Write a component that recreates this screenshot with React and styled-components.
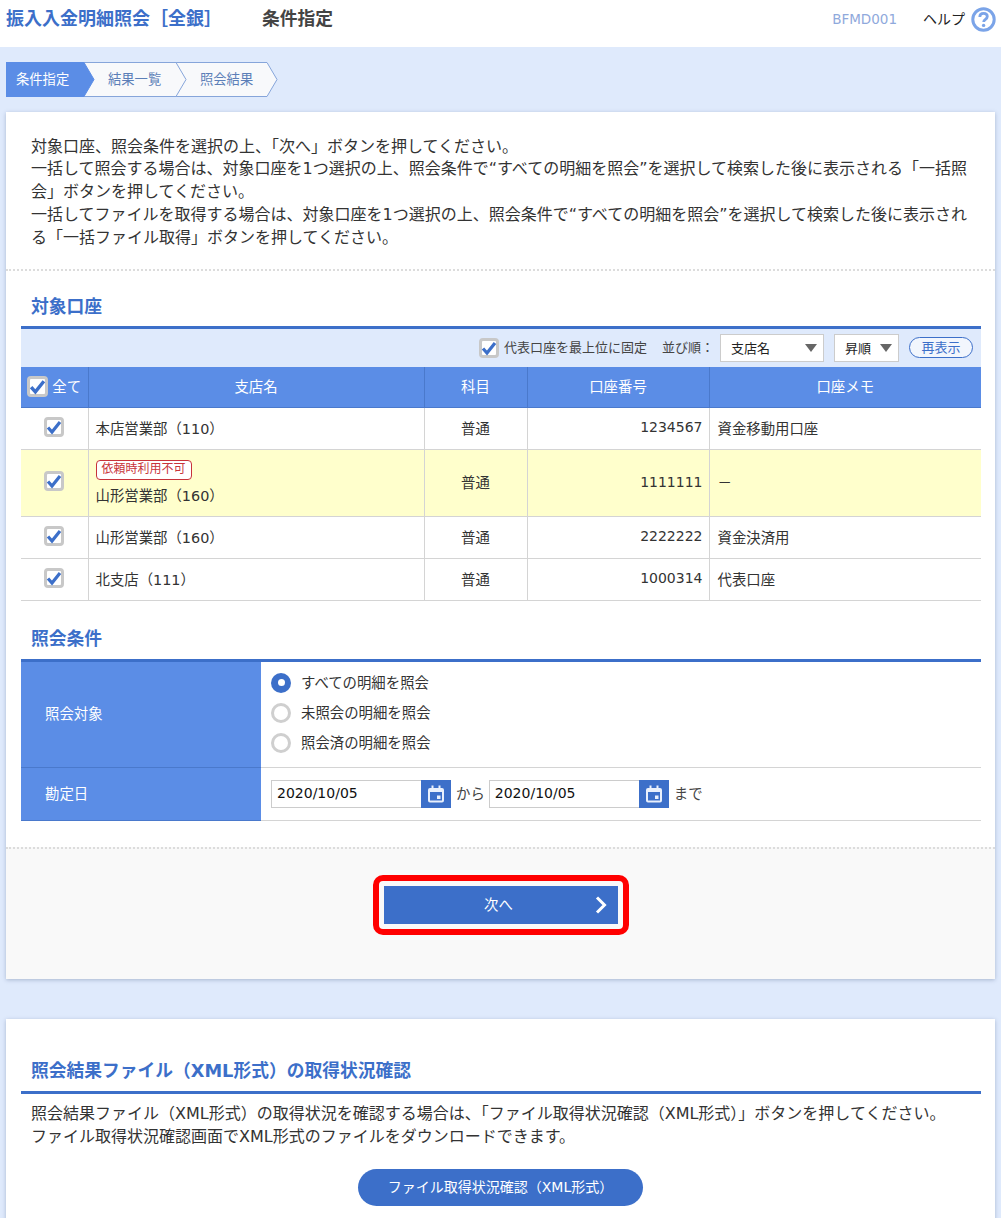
import React from "react";
import styled, { createGlobalStyle } from "styled-components";

const Global = createGlobalStyle`
  html, body { margin: 0; padding: 0; background: #dfeafc; }
  body { font-family: "DejaVu Sans", "Noto Sans CJK JP", sans-serif; color: #333; }
  * { box-sizing: border-box; }
`;

const Page = styled.div`
  width: 1001px;
  height: 1218px;
  overflow: hidden;
  background: #dfeafc;
`;
const Header = styled.header`
  height: 47px;
  background: #fff;
  display: flex;
  align-items: center;
  padding: 0 5px 8px 6px;
`;
const AppTitle = styled.h1`
  margin: 0;
  width: 256px;
  padding-bottom: 5px;
  font-size: 18px;
  font-weight: 700;
  color: #3c6fc9;
`;
const PageTitle = styled.h2`
  margin: 0;
  padding-bottom: 5px;
  font-size: 17.75px;
  font-weight: 700;
  color: #444;
`;
const ScreenId = styled.span`
  margin-left: auto;
  padding-bottom: 2px;
  font-size: 13.5px;
  color: #8fa9dc;
`;
const HelpLink = styled.span`
  margin-left: 26px;
  margin-right: 6px;
  padding-bottom: 3px;
  font-size: 14px;
  color: #222;
`;
const Steps = styled.ol`
  list-style: none;
  display: flex;
  margin: 15px 0 15px 6px;
  padding: 0;
  height: 35px;
`;
const Step = styled.li`
  position: relative;
  z-index: ${(p) => p.$z};
  width: ${(p) => p.$w}px;
  padding-left: ${(p) => p.$pad}px;
  font-size: 13.3px;
  line-height: 35px;
  color: ${(p) => (p.$active ? "#fff" : "#5c7fb8")};
  span { position: relative; }
`;
const StepShape = styled.svg`
  position: absolute;
  left: 0;
  top: 0;
`;
const Card = styled.section`
  margin: ${(p) => p.$top || 0}px 6px 0;
  background: #fff;
  box-shadow: 0 1px 4px rgba(70, 90, 130, 0.35);
`;
const Intro = styled.div`
  padding: 23.5px 25px 22px;
  font-size: 16px;
  line-height: 22.8px;
  border-bottom: 2px dotted #dcdcdc;
  height: 159px;
`;
const Line = styled.p`
  margin: 0;
`;
const Section = styled.div`
  padding: 0 14px 0 15px;
`;
const SectionTitle = styled.h3`
  margin: 0;
  padding: ${(p) => p.$top}px 0 ${(p) => p.$bottom}px 10px;
  font-size: 17.75px;
  line-height: 26px;
  font-weight: 700;
  color: #3c6fc9;
  border-bottom: 3px solid #3c6fc9;
`;
const Toolbar = styled.div`
  height: 38px;
  background: #dfeafc;
  display: flex;
  align-items: center;
  justify-content: flex-end;
  padding-right: 8px;
  font-size: 13px;
  color: #444;
`;
const Check = styled.span`
  width: ${(p) => p.$size || 20}px;
  height: ${(p) => p.$size || 20}px;
  flex: none;
  display: inline-flex;
  align-items: center;
  justify-content: center;
  background: #fff;
  border: 3px solid #c8c8c8;
  border-radius: 4px;
  svg { flex: none; }
`;
const ToolLabel = styled.span`
  margin-left: ${(p) => p.$ml}px;
  padding-bottom: 3px;
`;
const SelectBox = styled.div`
  width: ${(p) => p.$w}px;
  height: 28px;
  margin-left: ${(p) => p.$ml}px;
  padding: 0 6px 2px 10px;
  background: #fff;
  border: 1px solid #ccc;
  display: flex;
  align-items: center;
  justify-content: space-between;
  color: #222;
  font-size: 13px;
  &::after {
    content: "";
    margin-top: 2px;
    border-left: 6px solid transparent;
    border-right: 6px solid transparent;
    border-top: 8px solid #666;
  }
`;
const Redisplay = styled.button`
  width: 64px;
  height: 21px;
  margin: 0 0 1px 10px;
  padding: 0;
  border: 1px solid #3c6fc9;
  border-radius: 11px;
  background: #f2f6fd;
  color: #3c6fc9;
  font: inherit;
  font-size: 13px;
  line-height: 18px;
`;
const Table = styled.table`
  width: 960px;
  border-collapse: collapse;
  table-layout: fixed;
  font-size: 14.4px;
`;
const Th = styled.th`
  height: 40px;
  padding: 0 0 2px;
  background: #5b8de6;
  color: #fff;
  font-weight: 400;
  border-left: 1px solid #4a79cc;
  border-bottom: 1px solid #4a79cc;
  &:first-child { border-left: 0; padding: 0; }
`;
const AllCheck = styled.div`
  display: flex;
  align-items: center;
  justify-content: center;
  gap: 4px;
`;
const AllText = styled.span`
  padding-bottom: 2px;
`;
const Row = styled.tr`
  height: ${(p) => p.$h}px;
  background: ${(p) => (p.$warn ? "#ffffcc" : "#fff")};
`;
const Td = styled.td`
  padding: 0 ${(p) => p.$right || 7}px 2px ${(p) => p.$left || 7}px;
  border-left: 1px solid #d4d4d4;
  border-bottom: 1px solid #d4d4d4;
  text-align: ${(p) => p.$align || "left"};
  color: #333;
  &:first-child { border-left: 0; text-align: center; padding: 0; }
`;
const Digits = styled.span`
  font-size: 14px;
`;
const CellCheck = styled.div`
  display: flex;
  justify-content: center;
  padding-right: 1px;
  margin-top: -3px;
`;
const Badge = styled.span`
  display: block;
  width: 96px;
  height: 20px;
  margin: 1px 0 4px;
  border: 1px solid #c8333a;
  border-radius: 4px;
  background: #fff;
  color: #c8333a;
  font-size: 12px;
  line-height: 17px;
  text-align: center;
`;
const FormRow = styled.div`
  display: grid;
  grid-template-columns: 240px 720px;
  border-bottom: 1px solid #d4d4d4;
`;
const FormLabel = styled.div`
  display: flex;
  align-items: center;
  padding: 0 0 3px 24px;
  margin-bottom: -1px;
  background: #5b8de6;
  border-bottom: 1px solid #4a79cc;
  color: #fff;
  font-size: 14.4px;
`;
const FormValue = styled.div`
  padding: ${(p) => p.$pad};
  font-size: 14.4px;
  display: ${(p) => (p.$inline ? "flex" : "block")};
  align-items: center;
`;
const RadioRow = styled.label`
  display: flex;
  align-items: center;
  height: 30px;
  gap: 10px;
`;
const RadioText = styled.span`
  padding-bottom: 2px;
`;
const Radio = styled.span`
  width: 20px;
  height: 20px;
  border-radius: 50%;
  display: inline-flex;
  align-items: center;
  justify-content: center;
  background: #fff;
  border: 3px solid #cfcfcf;
  ${(p) =>
    p.$on &&
    `
    background: #3c6fc9;
    border: 0;
    &::after { content: ""; width: 7px; height: 7px; border-radius: 50%; background: #fff; }
  `}
`;
const DateInput = styled.div`
  width: 150px;
  height: 28px;
  padding-left: 5px;
  border: 1px solid #ccc;
  border-right: 0;
  line-height: 24px;
  font-size: 14px;
  color: #111;
`;
const CalButton = styled.span`
  width: 30px;
  height: 28px;
  background: #3c6fc9;
  display: inline-flex;
  align-items: center;
  justify-content: center;
`;
const Joiner = styled.span`
  margin: 0 4px 0 5px;
  padding-bottom: 3px;
  color: #444;
`;
const Footer = styled.div`
  margin-top: 26px;
  padding: 26px 0 44px;
  background: #f9f9f9;
  border-top: 2px dotted #dcdcdc;
  display: flex;
  justify-content: center;
`;
const RedFrame = styled.div`
  padding: 5px;
  border: 6px solid #f00;
  border-radius: 10px;
`;
const NextButton = styled.button`
  position: relative;
  display: block;
  width: 234px;
  height: 38px;
  padding: 0 4px 3px 0;
  border: 0;
  background: #3c6fc9;
  color: #fff;
  font: inherit;
  font-size: 14.4px;
  svg { position: absolute; right: 11px; top: 10px; }
`;
const BottomText = styled.div`
  padding: 9.5px 10px 0;
  font-size: 16px;
  line-height: 22.8px;
`;
const PillWrap = styled.div`
  display: flex;
  justify-content: center;
  margin-top: 20px;
  padding-right: 1px;
  padding-bottom: 30px;
`;
const Pill = styled.button`
  width: 285px;
  height: 37px;
  padding: 0 0 2px;
  border: 0;
  border-radius: 19px;
  background: #3c6fc9;
  color: #fff;
  font: inherit;
  font-size: 14px;
`;

const Tick = ({ size = 16 }) => (
  <svg width={size} height={size} viewBox="0 0 16 16">
    <path d="M2 8.500l4 4.500 8-10" fill="none" stroke="#3c6fc9" strokeWidth="3.2" />
  </svg>
);
const HelpIcon = () => (
  <svg width="25" height="25" viewBox="0 0 25 25">
    <circle cx="12.500" cy="12.500" r="10.700" fill="#fff" stroke="#7ba4e8" strokeWidth="3" />
    <path
      d="M8.800 10c0-2.300 1.600-3.600 3.800-3.600s3.700 1.200 3.700 3.200c0 2.800-3.600 2.800-3.600 5.400"
      fill="none"
      stroke="#7ba4e8"
      strokeWidth="2.800"
    />
    <circle cx="12.600" cy="18.400" r="1.700" fill="#7ba4e8" />
  </svg>
);
const CalIcon = () => (
  <svg width="16" height="18" viewBox="0 0 16 18">
    <path d="M3.500 0.500h2v2.500h5V0.500h2V3H14a2 2 0 0 1 2 2v10.500a2 2 0 0 1-2 2H2a2 2 0 0 1-2-2V5a2 2 0 0 1 2-2h1.500z" fill="#e9f0fc" />
    <rect x="2" y="7" width="12" height="8.500" fill="#3c6fc9" />
    <rect x="9" y="10.500" width="3.500" height="3.500" fill="#e9f0fc" />
  </svg>
);
const Chevron = () => (
  <svg width="12" height="18" viewBox="0 0 12 18">
    <path d="M2 1.500l7.500 7.500L2 16.500" fill="none" stroke="#fff" strokeWidth="3" />
  </svg>
);

const StepItem = ({ w, pad, z, active, first, children }) => (
  <Step $w={w} $pad={pad} $z={z} $active={active}>
    <StepShape width={w + 11} height="35" viewBox={`0 0 ${w + 11} 35`}>
      <path
        d={`M0 0.500H${w}L${w + 10} 17.500L${w} 34.500H0${first ? "Z" : ""}`}
        fill={active ? "#5b8de6" : "#f8f9fb"}
        stroke={active ? "#5b8de6" : "#86a5da"}
      />
    </StepShape>
    <span>{children}</span>
  </Step>
);

const rows = [
  { h: 42, name: "本店営業部（110）", no: "1234567", memo: "資金移動用口座" },
  { h: 67, warn: true, name: "山形営業部（160）", no: "1111111", memo: "－" },
  { h: 42, name: "山形営業部（160）", no: "2222222", memo: "資金決済用" },
  { h: 42, name: "北支店（111）", no: "1000314", memo: "代表口座" },
];

export default function App() {
  return (
    <Page>
      <Global />
      <Header>
        <AppTitle>振入入金明細照会［全銀］</AppTitle>
        <PageTitle>条件指定</PageTitle>
        <ScreenId>BFMD001</ScreenId>
        <HelpLink>ヘルプ</HelpLink>
        <HelpIcon />
      </Header>
      <Steps>
        <StepItem w={78} pad={10} z={3} active first>条件指定</StepItem>
        <StepItem w={92} pad={24} z={2}>結果一覧</StepItem>
        <StepItem w={91} pad={24} z={1}>照会結果</StepItem>
      </Steps>
      <Card>
        <Intro>
          <Line>対象口座、照会条件を選択の上、「次へ」ボタンを押してください。</Line>
          <Line>一括して照会する場合は、対象口座を1つ選択の上、照会条件で“すべての明細を照会”を選択して検索した後に表示される「一括照会」ボタンを押してください。</Line>
          <Line>一括してファイルを取得する場合は、対象口座を1つ選択の上、照会条件で“すべての明細を照会”を選択して検索した後に表示される「一括ファイル取得」ボタンを押してください。</Line>
        </Intro>
        <Section>
          <SectionTitle $top={23} $bottom={6}>対象口座</SectionTitle>
          <Toolbar>
            <Check><Tick /></Check>
            <ToolLabel $ml={5}>代表口座を最上位に固定</ToolLabel>
            <ToolLabel $ml={15}>並び順：</ToolLabel>
            <SelectBox $w={104} $ml={6}>支店名</SelectBox>
            <SelectBox $w={65} $ml={10}>昇順</SelectBox>
            <Redisplay>再表示</Redisplay>
          </Toolbar>
          <Table>
            <colgroup>
              <col width="67" />
              <col width="336" />
              <col width="103" />
              <col width="182" />
              <col width="272" />
            </colgroup>
            <thead>
              <tr>
                <Th>
                  <AllCheck>
                    <Check $size={21}><Tick size={17} /></Check>
                    <AllText>全て</AllText>
                  </AllCheck>
                </Th>
                <Th>支店名</Th>
                <Th>科目</Th>
                <Th>口座番号</Th>
                <Th>口座メモ</Th>
              </tr>
            </thead>
            <tbody>
              {rows.map((r, i) => (
                <Row key={i} $h={r.h} $warn={r.warn}>
                  <Td>
                    <CellCheck><Check><Tick /></Check></CellCheck>
                  </Td>
                  <Td>
                    {r.warn && <Badge>依頼時利用不可</Badge>}
                    {r.name}
                  </Td>
                  <Td $align="center">普通</Td>
                  <Td $align="right" $right={6}><Digits>{r.no}</Digits></Td>
                  <Td $left={8}>{r.memo}</Td>
                </Row>
              ))}
            </tbody>
          </Table>
          <SectionTitle $top={25} $bottom={7}>照会条件</SectionTitle>
          <FormRow>
            <FormLabel>照会対象</FormLabel>
            <FormValue $pad="6px 10px 9px">
              <RadioRow><Radio $on /><RadioText>すべての明細を照会</RadioText></RadioRow>
              <RadioRow><Radio /><RadioText>未照会の明細を照会</RadioText></RadioRow>
              <RadioRow><Radio /><RadioText>照会済の明細を照会</RadioText></RadioRow>
            </FormValue>
          </FormRow>
          <FormRow>
            <FormLabel>勘定日</FormLabel>
            <FormValue $pad="12px 10px 12px" $inline>
              <DateInput>2020/10/05</DateInput>
              <CalButton><CalIcon /></CalButton>
              <Joiner>から</Joiner>
              <DateInput>2020/10/05</DateInput>
              <CalButton><CalIcon /></CalButton>
              <Joiner>まで</Joiner>
            </FormValue>
          </FormRow>
        </Section>
        <Footer>
          <RedFrame>
            <NextButton>次へ<Chevron /></NextButton>
          </RedFrame>
        </Footer>
      </Card>
      <Card $top={40}>
        <Section>
          <SectionTitle $top={39} $bottom={7}>照会結果ファイル（XML形式）の取得状況確認</SectionTitle>
          <BottomText>
            <Line>照会結果ファイル（XML形式）の取得状況を確認する場合は、「ファイル取得状況確認（XML形式）」ボタンを押してください。</Line>
            <Line>ファイル取得状況確認画面でXML形式のファイルをダウンロードできます。</Line>
          </BottomText>
          <PillWrap>
            <Pill>ファイル取得状況確認（XML形式）</Pill>
          </PillWrap>
        </Section>
      </Card>
    </Page>
  );
}
